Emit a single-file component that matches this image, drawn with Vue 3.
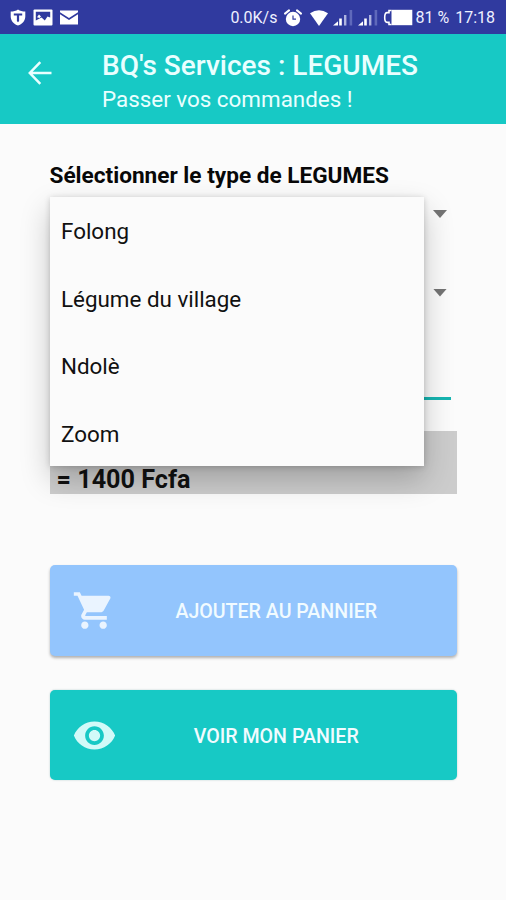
<script setup>
const options = ['Folong', 'Légume du village', 'Ndolè', 'Zoom']
const spinners = ['type', 'quantity']
</script>

<template>
  <div class="screen">
    <header class="status">
      <div class="group notifications">
        <svg class="shield" viewBox="0 0 16 17">
          <path d="M8 0.4 C10 1.8 12.6 2.4 15.3 2.4 V7.5 C15.3 12 12 15 8 16.6 C4 15 .7 12 .7 7.5 V2.4 C3.4 2.4 6 1.8 8 .4Z" fill="#fff" />
          <path d="M3.8 4.6 H12.2 V6.4 H9.1 V12 L8 13.2 L6.9 12 V6.4 H3.8Z" fill="#303a9f" />
        </svg>
        <svg class="photo" viewBox="0 0 20 17">
          <rect x=".5" y=".5" width="19" height="16" rx="1" fill="#fff" />
          <path d="M2.8 2.8 H17.2 V8.5 L14.5 7.4 L11.8 11.5 L8.5 8.6 L2.8 11.5Z" fill="#303a9f" />
          <path d="M4 8.2 L6 5.6 L8 7.6 L6.6 9Z" fill="#fff" />
        </svg>
        <svg class="mail" viewBox="0 0 18 15">
          <path d="M0 .5 H18 V2.3 L9 8 L0 2.3Z M0 4.2 L9 10 L18 4.2 V14.5 H0Z" fill="#fff" />
        </svg>
      </div>
      <div class="group indicators">
        <span class="speed">0.0K/s</span>
        <svg class="alarm" viewBox="0 0 18 18">
          <circle cx="9" cy="10" r="7.2" fill="#fff" />
          <path d="M1 4.6 L5 1.4 M17 4.6 L13 1.4" stroke="#fff" stroke-width="2" stroke-linecap="round" />
          <path d="M9 6.5 V10.2 H12" fill="none" stroke="#303a9f" stroke-width="1.2" />
        </svg>
        <svg class="wifi" viewBox="0 0 18 16">
          <path d="M0 3.2 Q9 -2.8 18 3.2 L9 16Z" fill="#fff" />
        </svg>
        <svg v-for="n in 2" :key="n" class="signal" viewBox="0 0 20 17">
          <path d="M0 16.5 L5 12.3 V16.5Z M6.2 9.5 H8.8 V16.5 H6.2Z" fill="#fff" />
          <path d="M11 6 H13.4 V16.5 H11Z" fill="#aeb4e0" />
          <path d="M16.6 1 H19.2 V16.5 H16.6Z" fill="#5f69bb" />
        </svg>
        <svg class="battery" viewBox="0 0 29 17">
          <path d="M8 1.5 H5.5 V3.6 H3.6 Q1.2 3.6 1.2 8.5 Q1.2 13.4 3.6 13.4 H5.5 V15.5 H8" fill="none" stroke="#fff" stroke-width="1.6" />
          <rect x="8" y=".8" width="20.8" height="15.4" fill="#fff" />
        </svg>
        <span class="percent">81 %</span>
        <span class="clock">17:18</span>
      </div>
    </header>

    <div class="appbar">
      <svg class="back" viewBox="0 0 24 24">
        <path d="M12.3 1.2 L1.8 12 L12.3 22.8 M2 12 H23.5" fill="none" stroke="#e9ffff" stroke-width="2.5" />
      </svg>
      <div class="titles">
        <h1>BQ's Services : LEGUMES</h1>
        <p>Passer vos commandes !</p>
      </div>
    </div>

    <main>
      <h2>Sélectionner le type de LEGUMES</h2>
      <section class="fields">
        <div v-for="s in spinners" :key="s" class="spinner"><i class="caret"></i></div>
        <div class="entry"></div>
        <div class="total">= 1400 Fcfa</div>
        <ul class="menu">
          <li v-for="o in options" :key="o">{{ o }}</li>
        </ul>
      </section>
      <button class="add">
        <svg viewBox="0 0 24 24">
          <path d="M7 18c-1.1 0-1.99.9-1.99 2S5.9 22 7 22s2-.9 2-2-.9-2-2-2zM1 2v2h2l3.6 7.59-1.35 2.45c-.16.28-.25.61-.25.96 0 1.1.9 2 2 2h12v-2H7.42c-.14 0-.25-.11-.25-.25l.03-.12.9-1.63h7.45c.75 0 1.41-.41 1.75-1.03l3.58-6.49c.08-.14.12-.31.12-.48 0-.55-.45-1-1-1H5.21l-.94-2H1zm16 16c-1.1 0-1.99.9-1.99 2s.89 2 1.99 2 2-.9 2-2-.9-2-2-2z" fill="#eaf4ff" />
        </svg>
        <span>AJOUTER AU PANNIER</span>
      </button>
      <button class="view">
        <svg viewBox="0 0 24 24">
          <path d="M12 4.5C7 4.5 2.73 7.61 1 12c1.73 4.39 6 7.5 11 7.5s9.27-3.11 11-7.5c-1.73-4.39-6-7.5-11-7.5zM12 17c-2.76 0-5-2.24-5-5s2.24-5 5-5 5 2.24 5 5-2.24 5-5 5zm0-8c-1.66 0-3 1.34-3 3s1.34 3 3 3 3-1.34 3-3-1.34-3-3-3z" fill="#d2faf8" />
        </svg>
        <span>VOIR MON PANIER</span>
      </button>
    </main>
  </div>
</template>

<style>
body {
  background: #fbfbfb;
}
</style>

<style scoped>
.screen {
  box-sizing: border-box;
  width: 506px;
  height: 900px;
  overflow: hidden;
  background: #fbfbfb;
  font-family: Roboto, sans-serif;
  color: #111;
}
h1, h2, p, ul {
  margin: 0;
  padding: 0;
}
svg {
  display: block;
  flex: none;
}
.status {
  box-sizing: border-box;
  height: 34px;
  padding: 1px 11px 0 10px;
  background: #303a9f;
  display: flex;
  justify-content: space-between;
  align-items: center;
  color: #eef0ff;
  font-size: 16px;
  line-height: 20px;
  white-space: nowrap;
}
.group {
  display: flex;
  align-items: center;
}
.shield { width: 16px; height: 17px; margin-right: 7px; }
.photo { width: 20px; height: 17px; margin-right: 7px; }
.mail { width: 18px; height: 15px; }
.speed { margin-right: 7px; }
.alarm { width: 18px; height: 18px; margin-right: 8px; }
.wifi { width: 18px; height: 16px; margin-right: 5px; }
.signal { width: 20px; height: 17px; margin-right: 5px; }
.battery { width: 30px; height: 17px; margin-right: 2px; }
.percent { margin-right: 6px; }
.appbar {
  box-sizing: border-box;
  height: 90px;
  padding-left: 28px;
  background: #17c9c5;
  display: flex;
  align-items: flex-start;
}
.back {
  width: 24px;
  height: 24px;
  margin-top: 27px;
}
.titles {
  margin-left: 50px;
  padding-top: 15px;
  color: #e9ffff;
}
h1 {
  font-size: 28px;
  font-weight: 500;
  line-height: 34px;
  white-space: nowrap;
}
p {
  font-size: 22.4px;
  line-height: 32px;
  white-space: nowrap;
}
main {
  padding: 35px 49px 0 49.5px;
}
h2 {
  font-size: 22.6px;
  font-weight: 700;
  line-height: 34px;
  white-space: nowrap;
  color: #080808;
}
.fields {
  position: relative;
  padding-top: 4px;
}
.spinner {
  box-sizing: border-box;
  height: 78.5px;
  padding: 13px 10px 0 0;
  display: flex;
  justify-content: flex-end;
}
.caret {
  width: 14px;
  height: 8px;
  background: #747474;
  clip-path: polygon(0 0, 100% 0, 50% 100%);
}
.entry {
  box-sizing: border-box;
  height: 46px;
  margin: 0 6px 31px 4px;
  border-bottom: 3px solid #16b5b1;
}
.total {
  box-sizing: border-box;
  height: 63px;
  padding: 33px 0 0 7px;
  background: #ccc;
  font-size: 25.2px;
  font-weight: 700;
  line-height: 31px;
}
.menu {
  position: absolute;
  z-index: 1;
  top: 4px;
  left: 0;
  width: 374px;
  height: 269px;
  list-style: none;
  background: #fbfbfb;
  box-shadow: 0 13px 28px rgba(0, 0, 0, 0.22), 0 1px 6px rgba(0, 0, 0, 0.18);
  display: grid;
  grid-template-rows: repeat(4, 67.5px);
}
.menu li {
  padding: 1px 0 0 11.5px;
  display: flex;
  align-items: center;
  font-size: 22.4px;
  line-height: 26px;
}
button {
  box-sizing: border-box;
  width: 100%;
  height: 91px;
  padding: 0 22px 0 22px;
  border: 0;
  border-radius: 5px;
  display: grid;
  grid-template-columns: 46px 1fr;
  align-items: center;
  font-family: inherit;
  font-size: 19.6px;
  font-weight: 500;
  color: #f1fbff;
}
button span {
  padding-top: 2px;
}
button svg {
  width: 45px;
  height: 45px;
}
.add {
  margin-top: 71px;
  background: #93c5fd;
  box-shadow: 0 2px 3px rgba(0, 0, 0, 0.3);
}
.add svg {
  width: 44px;
}
.view {
  margin-top: 34px;
  height: 90px;
  padding-top: 1px;
  background: #17c9c5;
  box-shadow: 0 0 2px rgba(0, 100, 100, 0.3);
}
</style>
